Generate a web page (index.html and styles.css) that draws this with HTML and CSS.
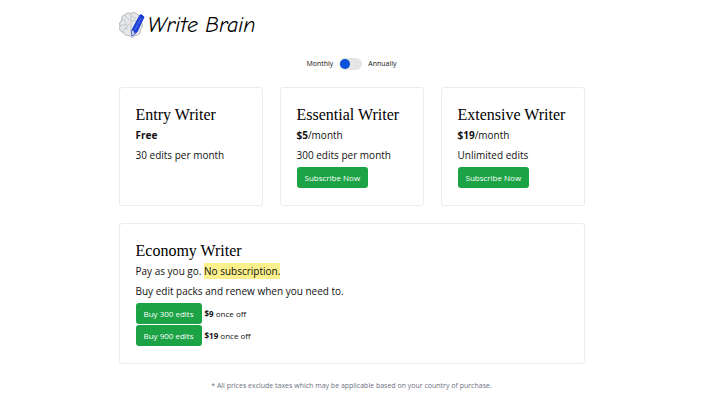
FILE: index.html
```html
<!DOCTYPE html>
<html lang="en">
<head>
<meta charset="utf-8">
<meta name="viewport" content="width=device-width, initial-scale=1">
<title>Write Brain</title>
<link rel="stylesheet" href="styles.css">
</head>
<body>
<div class="page">
  <header class="brand">
    <svg class="brand-icon" viewBox="0 0 26 28" aria-hidden="true">
      <path class="brain" d="M12 3C10 1 7 2 6 4C3 4 2 7 3 9C1 10 0 13 1 15C0 18 1 21 4 21C5 24 8 25 10 24C11 27 15 27 16 24C20 25 22 22 21 19C24 17 24 13 22 11C23 8 22 5 19 4C17 1 13 1 12 3Z"/>
      <path class="fold" d="M12 3V23M6 4C6 7 9 6 10 9M3 9C6 8 7 10 6 12M1 15C4 13 6 15 8 13M4 21C4 18 7 17 9 18M10 13C8 14 9 16 6 17M12 5C15 5 14 8 17 7M13 10C16 9 17 11 19 9"/>
      <path class="pencil" d="M21 4Q23 3 25 6L18 21L13 25L13 19Z"/>
      <path class="tip" d="M13 19L15 20L15 22L18 21L13 25Z"/>
      <path class="shine" d="M22 7L16 19"/>
    </svg>
    <span class="brand-name">Write Brain</span>
  </header>

  <label class="billing">
    <span>Monthly</span>
    <input class="switch" type="checkbox" role="switch" aria-label="Annual billing">
    <span>Annually</span>
  </label>

  <main class="plans">
    <section class="card">
      <h2>Entry Writer</h2>
      <p><strong>Free</strong></p>
      <p>30 edits per month</p>
    </section>
    <section class="card">
      <h2>Essential Writer</h2>
      <p><strong>$5</strong>/month</p>
      <p>300 edits per month</p>
      <button class="buy" type="button">Subscribe Now</button>
    </section>
    <section class="card">
      <h2>Extensive Writer</h2>
      <p><strong>$19</strong>/month</p>
      <p>Unlimited edits</p>
      <button class="buy" type="button">Subscribe Now</button>
    </section>
    <section class="card wide">
      <h2>Economy Writer</h2>
      <p>Pay as you go. <mark>No subscription.</mark></p>
      <p>Buy edit packs and renew when you need to.</p>
      <div class="pack"><button class="buy" type="button">Buy 300 edits</button><span><strong>$9</strong> once off</span></div>
      <div class="pack"><button class="buy" type="button">Buy 900 edits</button><span><strong>$19</strong> once off</span></div>
    </section>
  </main>

  <footer class="note">* All prices exclude taxes which may be applicable based on your country of purchase.</footer>
</div>
</body>
</html>
```
FILE: styles.css
```css
* {
  box-sizing: border-box;
}

body {
  margin: 0;
  padding: 10px 8px 0 0;
  background: #fff;
  color: #111;
  font-family: "Open Sans", "Noto Sans", sans-serif;
  font-size: 10px;
  line-height: 20px;
}

.page {
  max-width: 466px;
  margin: 0 auto;
}

.brand {
  display: flex;
  align-items: center;
  gap: 3px;
  height: 30px;
}

.brand-icon {
  width: 26px;
  height: 28px;
}

.brand-name {
  font-family: "Comic Neue", "Segoe Print", Lato, cursive;
  font-size: 22px;
  font-style: italic;
  color: #000;
}

.brain {
  fill: #e6e7e8;
  stroke: #b4b5b7;
}

.fold {
  fill: none;
  stroke: #bfc1c3;
}

.pencil {
  fill: #1d3fd8;
  stroke: #1d3fd8;
}

.tip {
  fill: #eef1fb;
  stroke: #2340a8;
  stroke-width: 0.5;
}

.shine {
  fill: none;
  stroke: #5b78ee;
}

.billing {
  display: flex;
  justify-content: center;
  align-items: center;
  gap: 6px;
  margin: 14px 0 13px;
  font-size: 7px;
}

.switch {
  appearance: none;
  display: flex;
  width: 23px;
  height: 12px;
  margin: 0;
  padding: 1px;
  border-radius: 6px;
  background: #e5e5e5;
}

.switch::before {
  content: "";
  width: 10px;
  height: 10px;
  border-radius: 50%;
  background: #0b50d8;
}

.switch:checked {
  justify-content: flex-end;
}

.plans {
  display: grid;
  grid-template-columns: repeat(3, minmax(0, 1fr));
  gap: 17px;
}

.card {
  padding: 16px 16px 17px;
  border: 1px solid #ececec;
  border-radius: 3px;
}

.wide {
  grid-column: 1 / -1;
}

h2 {
  margin: 0;
  font-family: "Liberation Serif", serif;
  font-size: 16px;
  font-weight: 400;
  line-height: 21px;
  white-space: nowrap;
  color: #000;
}

p {
  margin: 0;
}

mark {
  padding: 1px 0;
  background: #fbf08c;
  color: inherit;
}

.buy {
  display: block;
  height: 21px;
  margin: 2px 0 0;
  padding: 0 8px;
  border: 0;
  border-radius: 3px;
  background: #1ba345;
  color: #fff;
  font: inherit;
  font-size: 8px;
  white-space: nowrap;
}

.pack {
  display: flex;
  align-items: center;
  gap: 3px;
  margin-top: 1px;
  font-size: 8px;
}

.pack .buy {
  margin: 0;
}

p + .pack {
  margin-top: 2px;
}

.note {
  margin-top: 12px;
  text-align: center;
  font-size: 7px;
  color: #6b7280;
}
```
